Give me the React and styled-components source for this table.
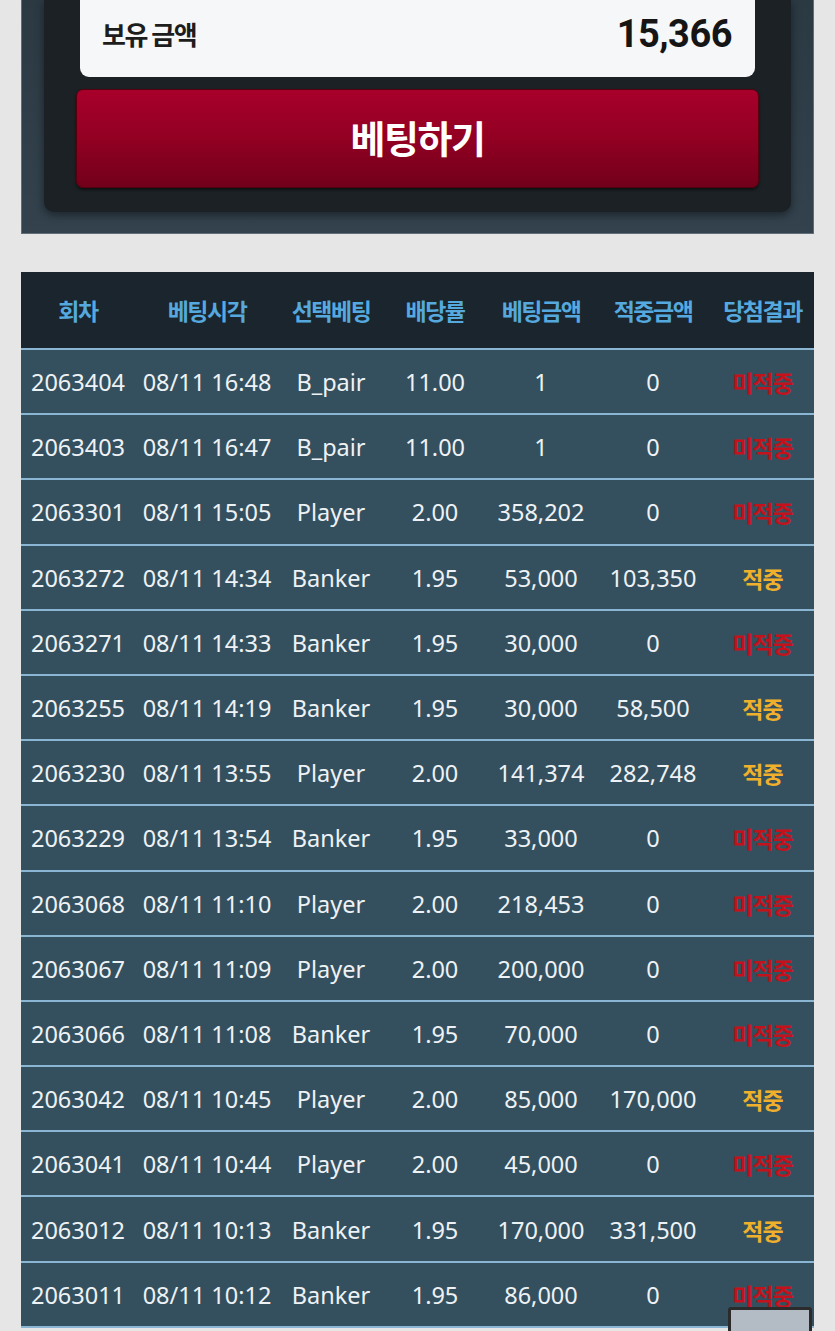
import React from "react";
import styled, { createGlobalStyle } from "styled-components";

const Global = createGlobalStyle`
  html, body { margin: 0; padding: 0; background: #e6e6e6; }
  body { font-family: "Noto Sans", "Noto Sans CJK KR", sans-serif; }
`;

const Page = styled.div`
  width: 835px;
  padding: 0 21px;
  box-sizing: border-box;
  display: flex;
  flex-direction: column;
  gap: 38px;
`;

const Panel = styled.section`
  background: linear-gradient(#2b3943, #33424d);
  border: 1px solid #5f6e79;
  border-top: none;
  padding: 0 22px 22px 22px;
  box-sizing: border-box;
  height: 234px;
`;

const Inner = styled.div`
  background: #1b2125;
  border-radius: 0 0 10px 10px;
  box-shadow: 0 3px 8px rgba(0, 0, 0, 0.45);
  padding: 0 32px 24px 32px;
  display: flex;
  flex-direction: column;
  gap: 12px;
`;

const Balance = styled.div`
  margin: 0 4px;
  height: 77px;
  background: #f6f7f8;
  border-radius: 0 0 9px 9px;
  display: flex;
  align-items: center;
  justify-content: space-between;
  padding: 0 23px 10px 22px;
  box-sizing: border-box;
`;

const BalanceLabel = styled.span`
  font-family: "Noto Sans CJK KR", sans-serif;
  font-weight: 700;
  font-size: 26px;
  color: #1d1d1d;
  letter-spacing: -1.5px;
`;

const BalanceValue = styled.span`
  font-family: Roboto, "Noto Sans", sans-serif;
  font-weight: 700;
  font-size: 38px;
  color: #151515;
  letter-spacing: -0.5px;
`;

const BetButton = styled.button`
  height: 99px;
  border: 1px solid #55000f;
  border-radius: 7px;
  background: linear-gradient(#a8002b, #920022 50%, #72001b);
  color: #fff;
  font-family: "Noto Sans CJK KR", sans-serif;
  font-weight: 700;
  font-size: 38px;
  letter-spacing: -1.5px;
  padding: 0 0 4px 0;
  box-shadow: 0 2px 3px rgba(0, 0, 0, 0.5);
`;

const Table = styled.div`
  display: grid;
  grid-template-columns: 114px 144px 104px 104px 108px 116px 103px;
`;

const HeadCell = styled.div`
  height: 78px;
  background: #1b252d;
  border-bottom: 2px solid #8bb6d3;
  box-sizing: border-box;
  display: flex;
  align-items: center;
  justify-content: center;
  padding-bottom: 1px;
  font-family: "Noto Sans CJK KR", sans-serif;
  font-weight: 700;
  font-size: 23px;
  letter-spacing: -1.5px;
  color: #55a9de;
  white-space: nowrap;
`;

const Cell = styled.div`
  height: 65.2px;
  background: #34505f;
  border-bottom: 2px solid #8ab6d4;
  box-sizing: border-box;
  display: flex;
  align-items: center;
  justify-content: center;
  padding-top: 1px;
  font-family: "Noto Sans", sans-serif;
  font-size: 23.5px;
  color: #eef2f5;
  white-space: nowrap;
`;

const Result = styled.span`
  font-family: "Noto Sans CJK KR", sans-serif;
  font-weight: 700;
  font-size: 23px;
  letter-spacing: -1px;
  color: ${(p) => (p.$win ? "#f0b02c" : "#c4121c")};
`;

const ScrollTop = styled.div`
  position: fixed;
  right: 23px;
  bottom: -40px;
  width: 78px;
  height: 58px;
  background: #b3bcc5;
  border: 3px solid #2b2b2b;
  border-radius: 3px;
`;

const headers = ["회차", "베팅시각", "선택베팅", "배당률", "베팅금액", "적중금액", "당첨결과"];

const rows = [
  ["2063404", "08/11 16:48", "B_pair", "11.00", "1", "0", false],
  ["2063403", "08/11 16:47", "B_pair", "11.00", "1", "0", false],
  ["2063301", "08/11 15:05", "Player", "2.00", "358,202", "0", false],
  ["2063272", "08/11 14:34", "Banker", "1.95", "53,000", "103,350", true],
  ["2063271", "08/11 14:33", "Banker", "1.95", "30,000", "0", false],
  ["2063255", "08/11 14:19", "Banker", "1.95", "30,000", "58,500", true],
  ["2063230", "08/11 13:55", "Player", "2.00", "141,374", "282,748", true],
  ["2063229", "08/11 13:54", "Banker", "1.95", "33,000", "0", false],
  ["2063068", "08/11 11:10", "Player", "2.00", "218,453", "0", false],
  ["2063067", "08/11 11:09", "Player", "2.00", "200,000", "0", false],
  ["2063066", "08/11 11:08", "Banker", "1.95", "70,000", "0", false],
  ["2063042", "08/11 10:45", "Player", "2.00", "85,000", "170,000", true],
  ["2063041", "08/11 10:44", "Player", "2.00", "45,000", "0", false],
  ["2063012", "08/11 10:13", "Banker", "1.95", "170,000", "331,500", true],
  ["2063011", "08/11 10:12", "Banker", "1.95", "86,000", "0", false],
];

export default function App() {
  return (
    <>
      <Global />
      <Page>
        <Panel>
          <Inner>
            <Balance>
              <BalanceLabel>보유 금액</BalanceLabel>
              <BalanceValue>15,366</BalanceValue>
            </Balance>
            <BetButton>베팅하기</BetButton>
          </Inner>
        </Panel>
        <Table>
          {headers.map((h) => (
            <HeadCell key={h}>{h}</HeadCell>
          ))}
          {rows.map((r) => (
            <React.Fragment key={r[0]}>
              {r.slice(0, 6).map((v, i) => (
                <Cell key={i}>{v}</Cell>
              ))}
              <Cell>
                <Result $win={r[6]}>{r[6] ? "적중" : "미적중"}</Result>
              </Cell>
            </React.Fragment>
          ))}
        </Table>
      </Page>
      <ScrollTop />
    </>
  );
}
